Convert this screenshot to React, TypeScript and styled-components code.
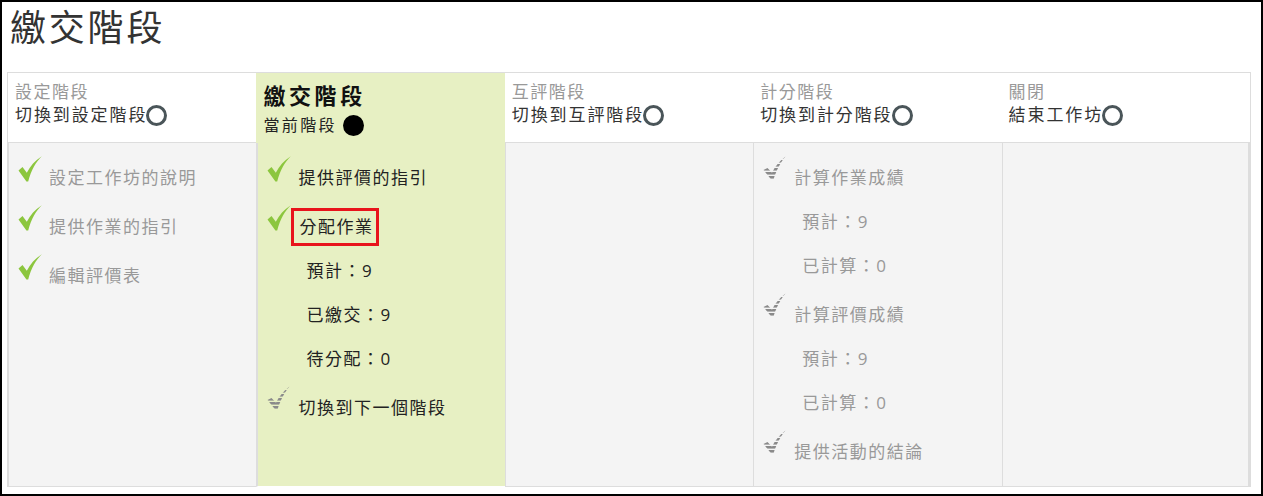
import React, { useId } from "react"
import styled, { createGlobalStyle, css } from "styled-components"

const GlobalStyle = createGlobalStyle`
  html, body {
    margin: 0;
    padding: 0;
    background: #fff;
  }
  body {
    font-family: "Open Sans", "Noto Sans CJK TC", sans-serif;
    color: #333;
  }
`

type Task = {
  label: string
  done?: boolean
  highlight?: boolean
  info?: string[]
}

type Phase = {
  title: string
  action?: string
  active?: boolean
  dim?: boolean
  tasks: Task[]
}

const phases: Phase[] = [
  {
    title: "設定階段",
    action: "切換到設定階段",
    dim: true,
    tasks: [
      { label: "設定工作坊的說明", done: true },
      { label: "提供作業的指引", done: true },
      { label: "編輯評價表", done: true },
    ],
  },
  {
    title: "繳交階段",
    active: true,
    tasks: [
      { label: "提供評價的指引", done: true },
      {
        label: "分配作業",
        done: true,
        highlight: true,
        info: ["預計：9", "已繳交：9", "待分配：0"],
      },
      { label: "切換到下一個階段" },
    ],
  },
  { title: "互評階段", action: "切換到互評階段", tasks: [] },
  {
    title: "計分階段",
    action: "切換到計分階段",
    dim: true,
    tasks: [
      { label: "計算作業成績", info: ["預計：9", "已計算：0"] },
      { label: "計算評價成績", info: ["預計：9", "已計算：0"] },
      { label: "提供活動的結論" },
    ],
  },
  { title: "關閉", action: "結束工作坊", tasks: [] },
]

const Frame = styled.div`
  box-sizing: border-box;
  width: 1263px;
  height: 496px;
  border: 2px solid #000;
  display: flex;
  flex-direction: column;
  padding: 4px 10px 7px 5px;
`

const PageTitle = styled.h2`
  margin: 0 0 22px 3px;
  font-size: 36px;
  line-height: 44px;
  font-weight: 400;
  letter-spacing: 2.8px;
  color: #333;
`

const Plan = styled.div`
  flex: 1;
  display: grid;
  grid-template-columns: repeat(5, 1fr);
  border: 1px solid #ddd;
  border-bottom: 0;
`

const Column = styled.div<{ $active?: boolean }>`
  display: flex;
  flex-direction: column;
  min-width: 0;
  ${p =>
    p.$active &&
    css`
      background: #e7f0c3;
    `}
`

const Header = styled.div<{ $active?: boolean }>`
  box-sizing: border-box;
  height: 70px;
  padding: 8px 7px 0;
  background: #fff;
  border-bottom: 1px solid #ddd;
  ${p =>
    p.$active &&
    css`
      background: #e7f0c3;
      border-bottom-color: #e7f0c3;
    `}
`

const PhaseLabel = styled.div`
  font-size: 17px;
  line-height: 22px;
  letter-spacing: 1.5px;
  color: #999;
`

const PhaseAction = styled.div`
  display: flex;
  align-items: center;
  font-size: 17px;
  line-height: 24px;
  letter-spacing: 1.9px;
  color: #333;
`

const ActiveTitle = styled.div`
  font-size: 22px;
  line-height: 28px;
  letter-spacing: 3.6px;
  font-weight: 700;
  color: #111;
`

const CurrentLine = styled.div`
  display: flex;
  align-items: center;
  margin-top: 4px;
  font-size: 16px;
  line-height: 24px;
  letter-spacing: 2.4px;
  color: #222;
`

const Dot = styled.span<{ $filled?: boolean }>`
  box-sizing: border-box;
  display: inline-block;
  width: 21px;
  height: 21px;
  border-radius: 50%;
  ${p =>
    p.$filled
      ? css`
          margin-left: 6px;
          background: #000;
        `
      : css`
          margin-left: -1px;
          border: 3px solid #4a5559;
        `}
`

const Tasks = styled.div<{ $active?: boolean; $last?: boolean }>`
  flex: 1;
  padding-top: 13px;
  background: #f4f4f4;
  border-left: 1px solid #ddd;
  border-bottom: 1px solid #ddd;
  ${p =>
    p.$last &&
    css`
      border-right: 2px solid #ddd;
    `}
  ${p =>
    p.$active &&
    css`
      background: #e7f0c3;
      border-left-width: 2px;
      border-bottom-color: #fff;
    `}
`

const TaskRow = styled.div<{ $dim?: boolean }>`
  box-sizing: border-box;
  height: 49px;
  display: flex;
  align-items: flex-start;
  padding-left: 9px;
  font-size: 17px;
  letter-spacing: 1.5px;
  color: ${p => (p.$dim ? "#999" : "#222")};
`

const IconBox = styled.span`
  width: 24px;
  height: 26px;
  flex: none;
  display: flex;
  justify-content: center;
`

const TaskText = styled.span`
  margin: 10px 0 0 7px;
  line-height: 24px;
  white-space: nowrap;
`

const Highlight = styled.span`
  margin-top: 3px;
  padding: 4px 3px 4px 5px;
  border: 3px solid #e8141c;
  line-height: 24px;
  white-space: nowrap;
`

const InfoRow = styled.div<{ $dim?: boolean }>`
  box-sizing: border-box;
  height: 44px;
  padding: 5px 0 0 48px;
  font-size: 17px;
  line-height: 24px;
  letter-spacing: 1.5px;
  color: ${p => (p.$dim ? "#999" : "#222")};
`

const DoneIcon = () => (
  <svg width="24" height="26" viewBox="0 0 24 26">
    <path
      d="M0.5 14.5 L4.5 11 L8.8 16.8 C12.3 10 17 4.4 23.8 0.2 C18 6 13.4 13.2 10.2 25.6 L8.4 25.6 Z"
      fill="#8cc63e"
    />
  </svg>
)

const TodoIcon = () => {
  const id = useId().replace(/:/g, "")
  return (
    <svg width="24" height="26" viewBox="0 0 24 26">
      <defs>
        <pattern id={id} width="24" height="4" patternUnits="userSpaceOnUse">
          <rect width="24" height="2.6" fill="#8a8a8a" />
        </pattern>
      </defs>
      <path
        d="M0.5 14 L4.5 12 L9 16.8 C12 10.5 16 5.2 22.5 0.4 C17.5 6.6 13.5 13.6 10.4 24 L8.6 24 Z"
        fill={`url(#${id})`}
      />
    </svg>
  )
}

const PhaseColumn = ({ phase, last }: { phase: Phase; last: boolean }) => (
  <Column $active={phase.active}>
    <Header $active={phase.active}>
      {phase.active ? (
        <>
          <ActiveTitle>{phase.title}</ActiveTitle>
          <CurrentLine>
            當前階段
            <Dot $filled />
          </CurrentLine>
        </>
      ) : (
        <>
          <PhaseLabel>{phase.title}</PhaseLabel>
          <PhaseAction>
            {phase.action}
            <Dot />
          </PhaseAction>
        </>
      )}
    </Header>
    <Tasks $active={phase.active} $last={last}>
      {phase.tasks.map(task => (
        <React.Fragment key={task.label}>
          <TaskRow $dim={phase.dim}>
            <IconBox>{task.done ? <DoneIcon /> : <TodoIcon />}</IconBox>
            {task.highlight ? (
              <Highlight>{task.label}</Highlight>
            ) : (
              <TaskText>{task.label}</TaskText>
            )}
          </TaskRow>
          {task.info?.map(line => (
            <InfoRow key={line} $dim={phase.dim}>
              {line}
            </InfoRow>
          ))}
        </React.Fragment>
      ))}
    </Tasks>
  </Column>
)

export default function App() {
  return (
    <>
      <GlobalStyle />
      <Frame>
        <PageTitle>繳交階段</PageTitle>
        <Plan>
          {phases.map((phase, i) => (
            <PhaseColumn
              key={phase.title}
              phase={phase}
              last={i === phases.length - 1}
            />
          ))}
        </Plan>
      </Frame>
    </>
  )
}
